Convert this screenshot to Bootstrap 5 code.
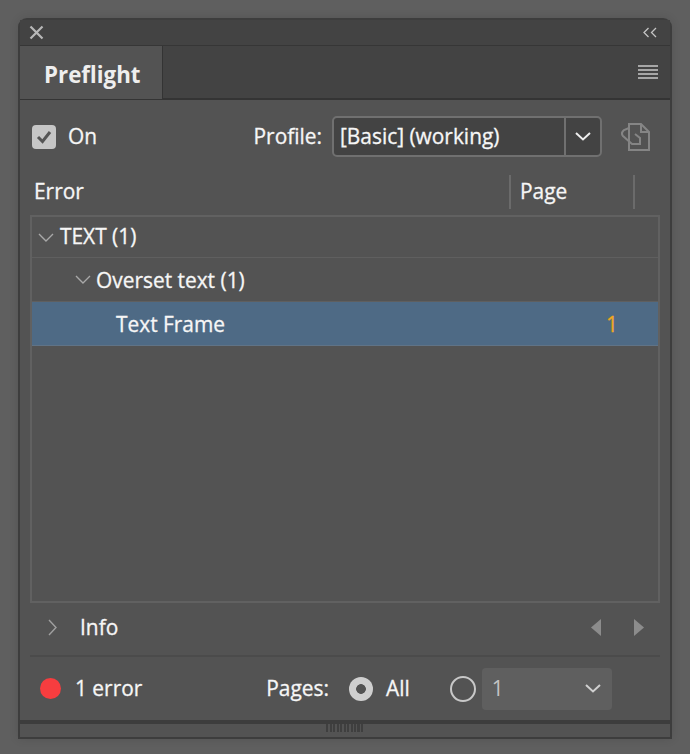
<!DOCTYPE html>
<html lang="en">
<head>
<meta charset="utf-8">
<title>Preflight</title>
<link href="https://cdn.jsdelivr.net/npm/bootstrap@5.3.0/dist/css/bootstrap.min.css" rel="stylesheet">
<style>
html,body{height:100%;}
body{background:#5f5f5f;color:#f6f6f6;font-family:"Open Sans","Noto Sans",sans-serif;font-size:20.900px;font-weight:500;line-height:1;padding:18px 18px 15px 18px;overflow:hidden;-webkit-text-stroke:.3px #f6f6f6;}
.pf-win{width:654px;height:721px;border:2px solid #3d3d3d;border-radius:9px 9px 0 0;background:#535353;box-shadow:0 0 10px rgba(0,0,0,.12);}
.pf-title{height:26px;background:#434343;border-bottom:1px solid #363636;padding:0 13px 0 9px;flex:none;}
.pf-tabs{height:54px;background:#434343;border-bottom:2px solid #343434;flex:none;}
.pf-tab{width:143px;height:53px;background:#535353;border-right:1px solid #343434;font-size:22.300px;font-weight:700;color:#eee;-webkit-text-stroke:0;padding:5px 0 0 24px;margin-bottom:-1px;}
.pf-menu{width:20px;height:14px;margin-right:12px;background:repeating-linear-gradient(#a6a6a6 0 2px,transparent 2px 4px);}
.pf-tools{height:73px;padding:0 19px 0 12px;flex:none;}
.pf-check{width:24px;height:24px;background:#c6c6c6;border-radius:4px;margin-right:12px;}
.pf-profile{margin-right:10px;}
.pf-select{width:270px;height:41px;border:2px solid #707070;border-radius:5px;background:#434343;}
.pf-selval{padding-left:6px;}
.pf-selbtn{width:36px;height:100%;border-left:2px solid #707070;}
.pf-doc{margin-left:19px;}
.pf-head{height:42px;padding:0 0 5px 14px;flex:none;}
.pf-col1{width:475px;}
.pf-col2{width:126px;height:34px;border-left:2px solid #6b6b6b;border-right:2px solid #6b6b6b;padding-left:9px;}
.pf-list{margin:0 10px;border:2px solid #616161;flex:1 1 auto;min-height:0;}
.pf-row{height:44px;border-bottom:1px solid #5f5f5f;padding-right:40px;}
.pf-row1{height:41px;padding-left:6px;}
.pf-row1 span{padding-bottom:2px;}
.pf-row1 .pf-twist{margin-right:6px;}
.pf-row2{padding-left:43px;}
.pf-row2 span,.pf-row3 span{padding-top:2px;}
.pf-row3{background:#4e6a85;padding-left:84px;border-bottom:1px solid #607386;}
.pf-row3 .pf-num{color:#f0a81f;-webkit-text-stroke:.3px #f0a81f;}
.pf-twist{width:16px;margin-right:5px;flex:none;}
.pf-info{height:54px;margin:0 10px;border-bottom:2px solid #4b4b4b;padding:0 16px 3px 18px;flex:none;}
.pf-infolabel{margin-left:23px;}
.pf-next{margin-left:33px;}
.pf-foot{height:63px;padding:0 20px;flex:none;}
.pf-dot{width:21px;height:21px;border-radius:50%;background:#f73d3f;margin-right:14px;}
.pf-pages{margin-left:124px;margin-right:20px;}
.pf-radio-on{width:24px;height:24px;border-radius:50%;background:radial-gradient(circle,#535353 0 4.500px,#cfcfcf 5.200px);margin-right:13px;}
.pf-radio-off{width:26px;height:26px;border-radius:50%;border:2px solid #c8c8c8;margin-left:40px;margin-right:6px;}
.pf-pagesel{width:130px;height:42px;background:#5f5f5f;border-radius:4px;padding:0 11px 0 10px;color:#c4c4c4;-webkit-text-stroke:0;}
.pf-sep{height:4px;background:#3d3d3d;flex:none;}
.pf-grip{height:13px;flex:none;}
.pf-gripbars{width:38px;height:8px;background:repeating-linear-gradient(90deg,#3f3f3f 0 2px,transparent 2px 3.500px);}
</style>
</head>
<body>
<div class="pf-win d-flex flex-column">
  <div class="pf-title d-flex align-items-center justify-content-between">
    <svg width="15" height="15" viewBox="0 0 15 15" fill="none" stroke="#b8b8b8" stroke-width="2.200"><path d="M1.500 1.500l12 12M13.500 1.500l-12 12"/></svg>
    <svg width="14" height="11" viewBox="0 0 14 11" fill="none" stroke="#c4c4c4" stroke-width="1.300"><path d="M5.500 1L1 5.500 5.500 10M13 1L8.500 5.500 13 10"/></svg>
  </div>
  <div class="pf-tabs d-flex align-items-start justify-content-between">
    <div class="pf-tab d-flex align-items-center">Preflight</div>
    <div class="pf-menu align-self-center"></div>
  </div>
  <div class="pf-tools d-flex align-items-center">
    <div class="pf-check d-flex align-items-center justify-content-center">
      <svg width="16" height="14" viewBox="0 0 16 14" fill="none" stroke="#555" stroke-width="3"><path d="M2 7l4.500 4.500L14 2"/></svg>
    </div>
    <span>On</span>
    <span class="pf-profile ms-auto">Profile:</span>
    <div class="pf-select d-flex align-items-center justify-content-between">
      <span class="pf-selval">[Basic] (working)</span>
      <div class="pf-selbtn d-flex align-items-center justify-content-center">
        <svg width="16" height="9" viewBox="0 0 16 9" fill="none" stroke="#eee" stroke-width="2"><path d="M1 1l7 6.500L15 1"/></svg>
      </div>
    </div>
    <svg class="pf-doc" width="30" height="30" viewBox="0 0 30 30" fill="none" stroke="#858585" stroke-width="2">
      <path d="M8 2h12l8 8v18H8z"/><path d="M20 2v8h8"/>
      <path d="M8 6L3 8Q-.5 11 2 14l9 8h8v-6l-5-4"/>
    </svg>
  </div>
  <div class="pf-head d-flex align-items-center">
    <div class="pf-col1">Error</div>
    <div class="pf-col2 d-flex align-items-center">Page</div>
  </div>
  <div class="pf-list">
    <div class="pf-row pf-row1 d-flex align-items-center">
      <svg class="pf-twist" width="16" height="9" viewBox="0 0 16 9" fill="none" stroke="#a8a8a8" stroke-width="1.400"><path d="M1 1l7 7 7-7"/></svg>
      <span>TEXT (1)</span>
    </div>
    <div class="pf-row pf-row2 d-flex align-items-center">
      <svg class="pf-twist" width="16" height="9" viewBox="0 0 16 9" fill="none" stroke="#a8a8a8" stroke-width="1.400"><path d="M1 1l7 7 7-7"/></svg>
      <span>Overset text (1)</span>
    </div>
    <div class="pf-row pf-row3 d-flex align-items-center justify-content-between">
      <span>Text Frame</span>
      <span class="pf-num">1</span>
    </div>
  </div>
  <div class="pf-info d-flex align-items-center">
    <svg width="9" height="17" viewBox="0 0 9 17" fill="none" stroke="#a0a0a0" stroke-width="1.400"><path d="M1 1l7 7.500L1 16"/></svg>
    <span class="pf-infolabel">Info</span>
    <svg class="ms-auto" width="10" height="17" viewBox="0 0 10 17" fill="#8c8c8c"><path d="M10 0v17L0 8.500z"/></svg>
    <svg class="pf-next" width="10" height="17" viewBox="0 0 10 17" fill="#8c8c8c"><path d="M0 0v17l10-8.500z"/></svg>
  </div>
  <div class="pf-foot d-flex align-items-center">
    <div class="pf-dot"></div>
    <span>1 error</span>
    <span class="pf-pages">Pages:</span>
    <div class="pf-radio-on"></div>
    <span>All</span>
    <div class="pf-radio-off"></div>
    <div class="pf-pagesel d-flex align-items-center justify-content-between">
      <span>1</span>
      <svg width="16" height="9" viewBox="0 0 16 9" fill="none" stroke="#d0d0d0" stroke-width="2"><path d="M1 1l7 6.500L15 1"/></svg>
    </div>
  </div>
  <div class="pf-sep"></div>
  <div class="pf-grip d-flex align-items-start justify-content-center"><div class="pf-gripbars"></div></div>
</div>
<script src="https://cdn.jsdelivr.net/npm/bootstrap@5.3.0/dist/js/bootstrap.bundle.min.js"></script>
</body>
</html>
